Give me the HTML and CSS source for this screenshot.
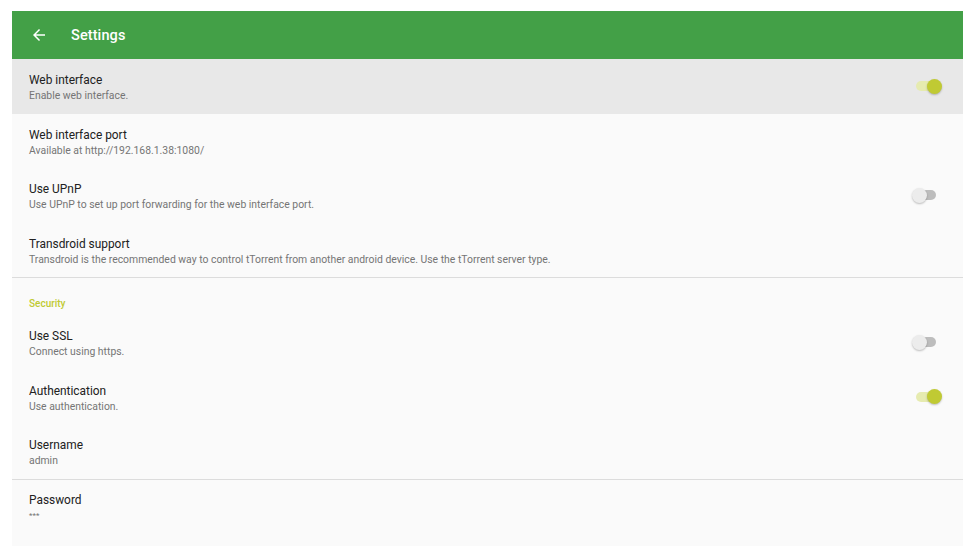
FILE: index.html
```html
<!DOCTYPE html>
<html>
<head>
<meta charset="utf-8">
<link rel="stylesheet" href="styles.css">
</head>
<body>
<div class="app">
  <header class="toolbar">
    <svg class="back" viewBox="0 0 24 24" width="18" height="18"><path d="M20 11H7.83l5.59-5.59L12 4l-8 8 8 8 1.41-1.41L7.83 13H20v-2z" fill="#fff"/></svg>
    <span class="title">Settings</span>
  </header>
  <div class="list">
    <div class="row active">
      <div class="text"><div class="t">Web interface</div><div class="s">Enable web interface.</div></div>
      <span class="switch on"></span>
    </div>
    <div class="row">
      <div class="text"><div class="t">Web interface port</div><div class="s">Available at http://192.168.1.38:1080/</div></div>
    </div>
    <div class="row">
      <div class="text"><div class="t">Use UPnP</div><div class="s">Use UPnP to set up port forwarding for the web interface port.</div></div>
      <span class="switch"></span>
    </div>
    <div class="row">
      <div class="text"><div class="t">Transdroid support</div><div class="s">Transdroid is the recommended way to control tTorrent from another android device. Use the tTorrent server type.</div></div>
    </div>
    <div class="divider"></div>
    <div class="category">Security</div>
    <div class="row">
      <div class="text"><div class="t">Use SSL</div><div class="s">Connect using https.</div></div>
      <span class="switch"></span>
    </div>
    <div class="row">
      <div class="text"><div class="t">Authentication</div><div class="s">Use authentication.</div></div>
      <span class="switch on"></span>
    </div>
    <div class="row">
      <div class="text"><div class="t">Username</div><div class="s">admin</div></div>
    </div>
    <div class="divider"></div>
    <div class="row pw">
      <div class="text"><div class="t">Password</div><div class="s stars">***</div></div>
    </div>
  </div>
</div>
</body>
</html>
```
FILE: styles.css
```css
html, body {
  margin: 0;
  padding: 0;
  background: #ffffff;
}
body {
  font-family: Roboto, "Noto Sans", sans-serif;
}
.app {
  margin: 11px 0 0 12px;
  width: 951px;
  height: 535px;
  background: #fafafa;
  display: flex;
  flex-direction: column;
  overflow: hidden;
}
.toolbar {
  height: 48px;
  background: #43a047;
  display: flex;
  align-items: center;
  color: #fff;
  flex-shrink: 0;
}
.back {
  margin-left: 18px;
  width: 18px;
  height: 18px;
}
.title {
  margin-left: 23px;
  font-size: 14.5px;
  font-weight: 500;
  letter-spacing: 0.1px;
}
.list {
  display: flex;
  flex-direction: column;
}
.row {
  height: 54.5px;
  box-sizing: border-box;
  padding: 13px 20px 0 17px;
  display: flex;
  align-items: flex-start;
  justify-content: space-between;
}
.row.active {
  background: #e8e8e8;
}
.row.pw {
  padding-top: 12px;
}
.t {
  font-size: 11.9px;
  line-height: 16px;
  color: #212121;
}
.s {
  font-size: 10.4px;
  line-height: 14px;
  margin-top: 1px;
  color: #757575;
}
.s.stars {
  font-size: 8px;
}
.divider {
  height: 1px;
  background: #dcdcdc;
}
.category {
  height: 37px;
  box-sizing: border-box;
  padding: 19px 0 0 17px;
  font-size: 10px;
  font-weight: 500;
  line-height: 14px;
  color: #c0ca33;
}
.switch {
  position: relative;
  width: 34px;
  height: 20px;
  margin-top: 4px;
}
.switch::before {
  content: "";
  position: absolute;
  left: 9px;
  top: 5px;
  width: 18px;
  height: 10px;
  border-radius: 5px;
  background: #bdbdbd;
}
.switch::after {
  content: "";
  position: absolute;
  left: 3px;
  top: 2.5px;
  width: 15px;
  height: 15px;
  border-radius: 50%;
  background: #ececec;
  box-shadow: 0 1px 2px rgba(0,0,0,0.25);
}
.switch.on::before {
  left: 7px;
  background: #e6ebb0;
}
.switch.on::after {
  left: 18px;
  background: #c0ca33;
}
```
